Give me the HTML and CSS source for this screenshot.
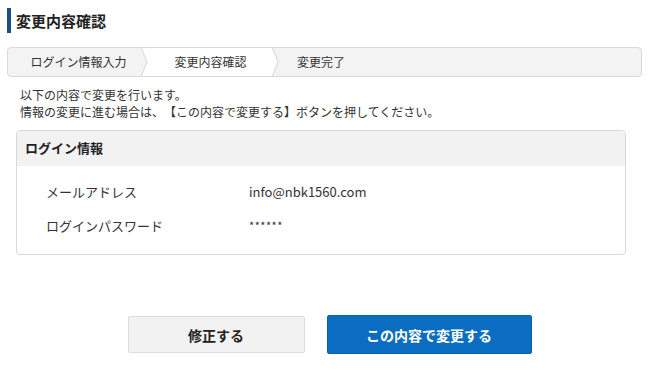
FILE: index.html
```html
<!DOCTYPE html>
<html lang="ja">
<head>
<meta charset="utf-8">
<link rel="stylesheet" href="styles.css">
</head>
<body>
<div class="page">
  <h1 class="title">変更内容確認</h1>
  <ol class="steps">
    <li class="step step-1">ログイン情報入力
      <svg class="chev" width="8" height="30" viewBox="0 0 8 30"><polygon points="0,0 1,0 7,15 1,30 0,30" fill="#f3f3f3"/><polyline points="1,0 7,15 1,30" fill="none" stroke="#d6d6d6" stroke-width="1"/></svg>
    </li>
    <li class="step step-2 active">変更内容確認
      <svg class="chev" width="8" height="30" viewBox="0 0 8 30"><polygon points="0,0 1,0 7,15 1,30 0,30" fill="#ffffff"/><polyline points="1,0 7,15 1,30" fill="none" stroke="#d6d6d6" stroke-width="1"/></svg>
    </li>
    <li class="step step-3">変更完了</li>
  </ol>
  <div class="intro">
    <p>以下の内容で変更を行います。</p>
    <p>情報の変更に進む場合は、【この内容で変更する】ボタンを押してください。</p>
  </div>
  <section class="card">
    <h2 class="card-head">ログイン情報</h2>
    <dl class="card-body">
      <div class="row"><dt>メールアドレス</dt><dd>info@nbk1560.com</dd></div>
      <div class="row"><dt>ログインパスワード</dt><dd class="pw">******</dd></div>
    </dl>
  </section>
  <div class="actions">
    <button class="btn btn-back">修正する</button>
    <button class="btn btn-submit">この内容で変更する</button>
  </div>
</div>
</body>
</html>
```
FILE: styles.css
```css
* { box-sizing: border-box; }
html, body { margin: 0; padding: 0; background: #fff; }
body {
  font-family: "Noto Sans CJK JP", "Noto Sans", sans-serif;
  color: #333;
  font-size: 12px;
}
.page { padding: 8px 8px 0 7px; width: 650px; }
.title {
  margin: 0;
  height: 25px;
  border-left: 4px solid #1b4f8a;
  padding-left: 5px;
  font-size: 15px;
  font-weight: bold;
  line-height: 25px;
  color: #222;
}
.steps {
  list-style: none;
  margin: 14px 0 0;
  padding: 0;
  display: flex;
  height: 30px;
  border: 1px solid #d9d9d9;
  border-radius: 4px;
  background: #f3f3f3;
  overflow: hidden;
}
.step {
  position: relative;
  line-height: 28px;
  font-size: 12px;
  color: #333;
}
.step-1 { width: 133px; text-align: center; padding-left: 8px; }
.step-2 { width: 131px; text-align: center; padding-left: 8px; background: #fff; }
.step-3 { flex: 1; padding-left: 25px; }
.chev { position: absolute; top: -1px; right: -7px; z-index: 1; }
.intro {
  margin: 9px 0 0 13px;
  line-height: 17px;
  text-spacing-trim: space-all;
}
.intro p { margin: 0; }
.card {
  margin: 10px 16px 0 9px;
  border: 1px solid #d9d9d9;
  border-radius: 4px;
  overflow: hidden;
}
.card-head {
  margin: 0;
  height: 35px;
  background: #f2f2f2;
  font-size: 13px;
  font-weight: bold;
  line-height: 33px;
  padding-left: 8px;
  color: #222;
}
.card-body { margin: 0; padding: 8px 0 12px 29px; }
.row { display: flex; height: 34px; align-items: center; font-size: 13px; }
.row dt { width: 203px; }
.row dd { margin: 0; }
.pw { font-size: 11px; letter-spacing: 0.5px; }
.actions {
  display: flex;
  justify-content: center;
  gap: 22px;
  margin-top: 60px;
  padding-left: 10px;
}
.btn {
  font-family: inherit;
  font-size: 14px;
  font-weight: bold;
  border-radius: 2px;
  cursor: pointer;
}
.btn-back {
  width: 177px;
  height: 37px;
  margin-top: 1px;
  background: #f2f2f2;
  border: 1px solid #dcdcdc;
  color: #222;
}
.btn-submit {
  width: 205px;
  height: 39px;
  background: #0a6dc2;
  border: 1px solid #0a62ad;
  color: #fff;
}
```
